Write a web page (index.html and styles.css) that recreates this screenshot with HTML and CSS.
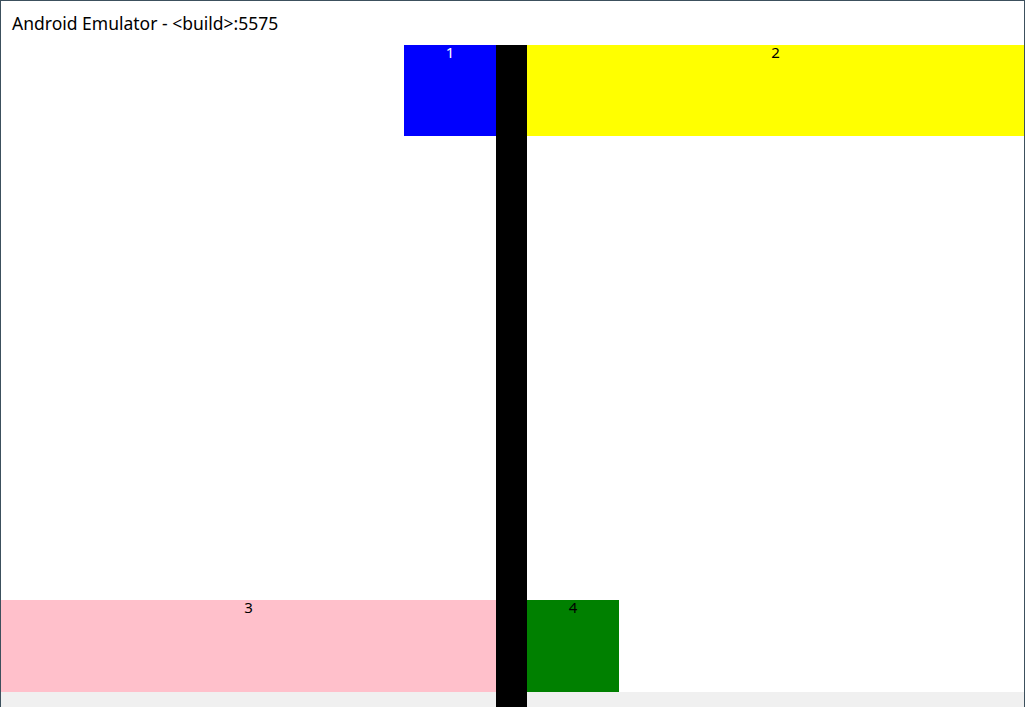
FILE: index.html
```html
<!DOCTYPE html>
<html>
<head>
<meta charset="utf-8">
<link rel="stylesheet" href="styles.css">
</head>
<body>
<div class="window">
  <div class="titlebar"><span class="title">Android Emulator - &lt;build&gt;:5575</span></div>
  <div class="content">
    <div class="cell blue"><span class="label">1</span></div>
    <div class="cell yellow"><span class="label">2</span></div>
    <div class="cell pink"><span class="label">3</span></div>
    <div class="cell green"><span class="label">4</span></div>
    <div class="strip"></div>
    <div class="divider"></div>
  </div>
</div>
</body>
</html>
```
FILE: styles.css
```css
html, body {
  margin: 0;
  padding: 0;
  background: #ffffff;
}
.window {
  width: 1025px;
  height: 707px;
  box-sizing: border-box;
  border: 1px solid #3c505d;
  border-bottom: none;
  display: flex;
  flex-direction: column;
  background: #ffffff;
  overflow: hidden;
}
.titlebar {
  height: 44px;
  flex: none;
  display: flex;
  align-items: flex-start;
  padding-left: 11px;
}
.title {
  font-family: "Noto Sans", sans-serif;
  font-size: 17.5px;
  line-height: 20px;
  margin-top: 11.5px;
  color: #000000;
}
.content {
  flex: 1;
  display: grid;
  grid-template-columns: 403px 92px 31px 92px 1fr;
  grid-template-rows: 91px 464px 92px 1fr;
}
.cell {
  display: flex;
  justify-content: center;
  align-items: flex-start;
}
.label {
  font-family: "Noto Sans", sans-serif;
  font-size: 15px;
  line-height: 15px;
  margin-top: 0;
  color: #000000;
}
.blue {
  grid-column: 2;
  grid-row: 1;
  background: #0000ff;
}
.blue .label {
  color: #ffffff;
}
.yellow {
  grid-column: 4 / 6;
  grid-row: 1;
  background: #ffff00;
}
.pink {
  grid-column: 1 / 3;
  grid-row: 3;
  background: #ffc0cb;
}
.green {
  grid-column: 4;
  grid-row: 3;
  background: #008000;
}
.strip {
  grid-column: 1 / 6;
  grid-row: 4;
  background: #f0f0f0;
}
.divider {
  grid-column: 3;
  grid-row: 1 / 5;
  background: #000000;
}
```
